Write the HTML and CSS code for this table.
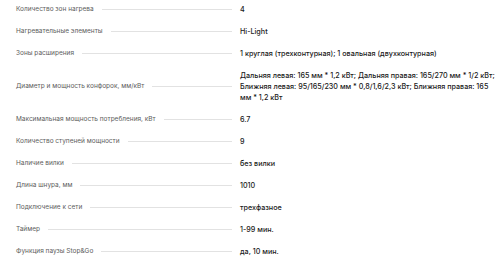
FILE: index.html
```html
<!DOCTYPE html>
<html lang="ru">
<head>
    <meta charset="UTF-8">
    <meta name="viewport" content="width=device-width, initial-scale=1.0">
    <title>Характеристики</title>
    <link rel="stylesheet" href="styles.css">
</head>
<body>
    <ul class="specs">
        <li class="spec">
            <div class="spec-name"><span>Количество зон нагрева</span><i class="spec-line"></i></div>
            <div class="spec-value">4</div>
        </li>
        <li class="spec">
            <div class="spec-name"><span>Нагревательные элементы</span><i class="spec-line"></i></div>
            <div class="spec-value">Hi-Light</div>
        </li>
        <li class="spec">
            <div class="spec-name"><span>Зоны расширения</span><i class="spec-line"></i></div>
            <div class="spec-value">1 круглая (трехконтурная); 1 овальная (двухконтурная)</div>
        </li>
        <li class="spec">
            <div class="spec-name"><span>Диаметр и мощность конфорок, мм/кВт</span><i class="spec-line"></i></div>
            <div class="spec-value">Дальняя левая: 165 мм * 1,2 кВт; Дальняя правая: 165/270 мм * 1/2 кВт; Ближняя левая: 95/165/230 мм * 0,8/1,6/2,3 кВт; Ближняя правая: 165 мм * 1,2 кВт</div>
        </li>
        <li class="spec">
            <div class="spec-name"><span>Максимальная мощность потребления, кВт</span><i class="spec-line"></i></div>
            <div class="spec-value">6.7</div>
        </li>
        <li class="spec">
            <div class="spec-name"><span>Количество ступеней мощности</span><i class="spec-line"></i></div>
            <div class="spec-value">9</div>
        </li>
        <li class="spec">
            <div class="spec-name"><span>Наличие вилки</span><i class="spec-line"></i></div>
            <div class="spec-value">без вилки</div>
        </li>
        <li class="spec">
            <div class="spec-name"><span>Длина шнура, мм</span><i class="spec-line"></i></div>
            <div class="spec-value">1010</div>
        </li>
        <li class="spec">
            <div class="spec-name"><span>Подключение к сети</span><i class="spec-line"></i></div>
            <div class="spec-value">трехфазное</div>
        </li>
        <li class="spec">
            <div class="spec-name"><span>Таймер</span><i class="spec-line"></i></div>
            <div class="spec-value">1-99 мин.</div>
        </li>
        <li class="spec">
            <div class="spec-name"><span>Функция паузы Stop&amp;Go</span><i class="spec-line"></i></div>
            <div class="spec-value">да, 10 мин.</div>
        </li>
    </ul>
</body>
</html>
```

FILE: styles.css
```css
body {
    font-family: Inter, "Noto Sans", sans-serif;
    background-color: #ffffff;
    margin: 0;
    padding: 4px 4px 0 16px;
}
.specs {
    list-style: none;
    margin: 0;
    padding: 0;
    display: flex;
    flex-direction: column;
    gap: 11px;
}
.spec {
    display: grid;
    grid-template-columns: 216px 1fr;
    column-gap: 8px;
    align-items: center;
    line-height: 11px;
}
.spec-name {
    display: flex;
    align-items: center;
    font-size: 6.5px;
    color: #5c5c5c;
}
.spec-line {
    flex: 1;
    height: 1px;
    margin-left: 8px;
    background-color: #e2e2e2;
}
.spec-value {
    font-size: 7.2px;
    font-weight: 500;
    color: #1a1a1a;
}
```
